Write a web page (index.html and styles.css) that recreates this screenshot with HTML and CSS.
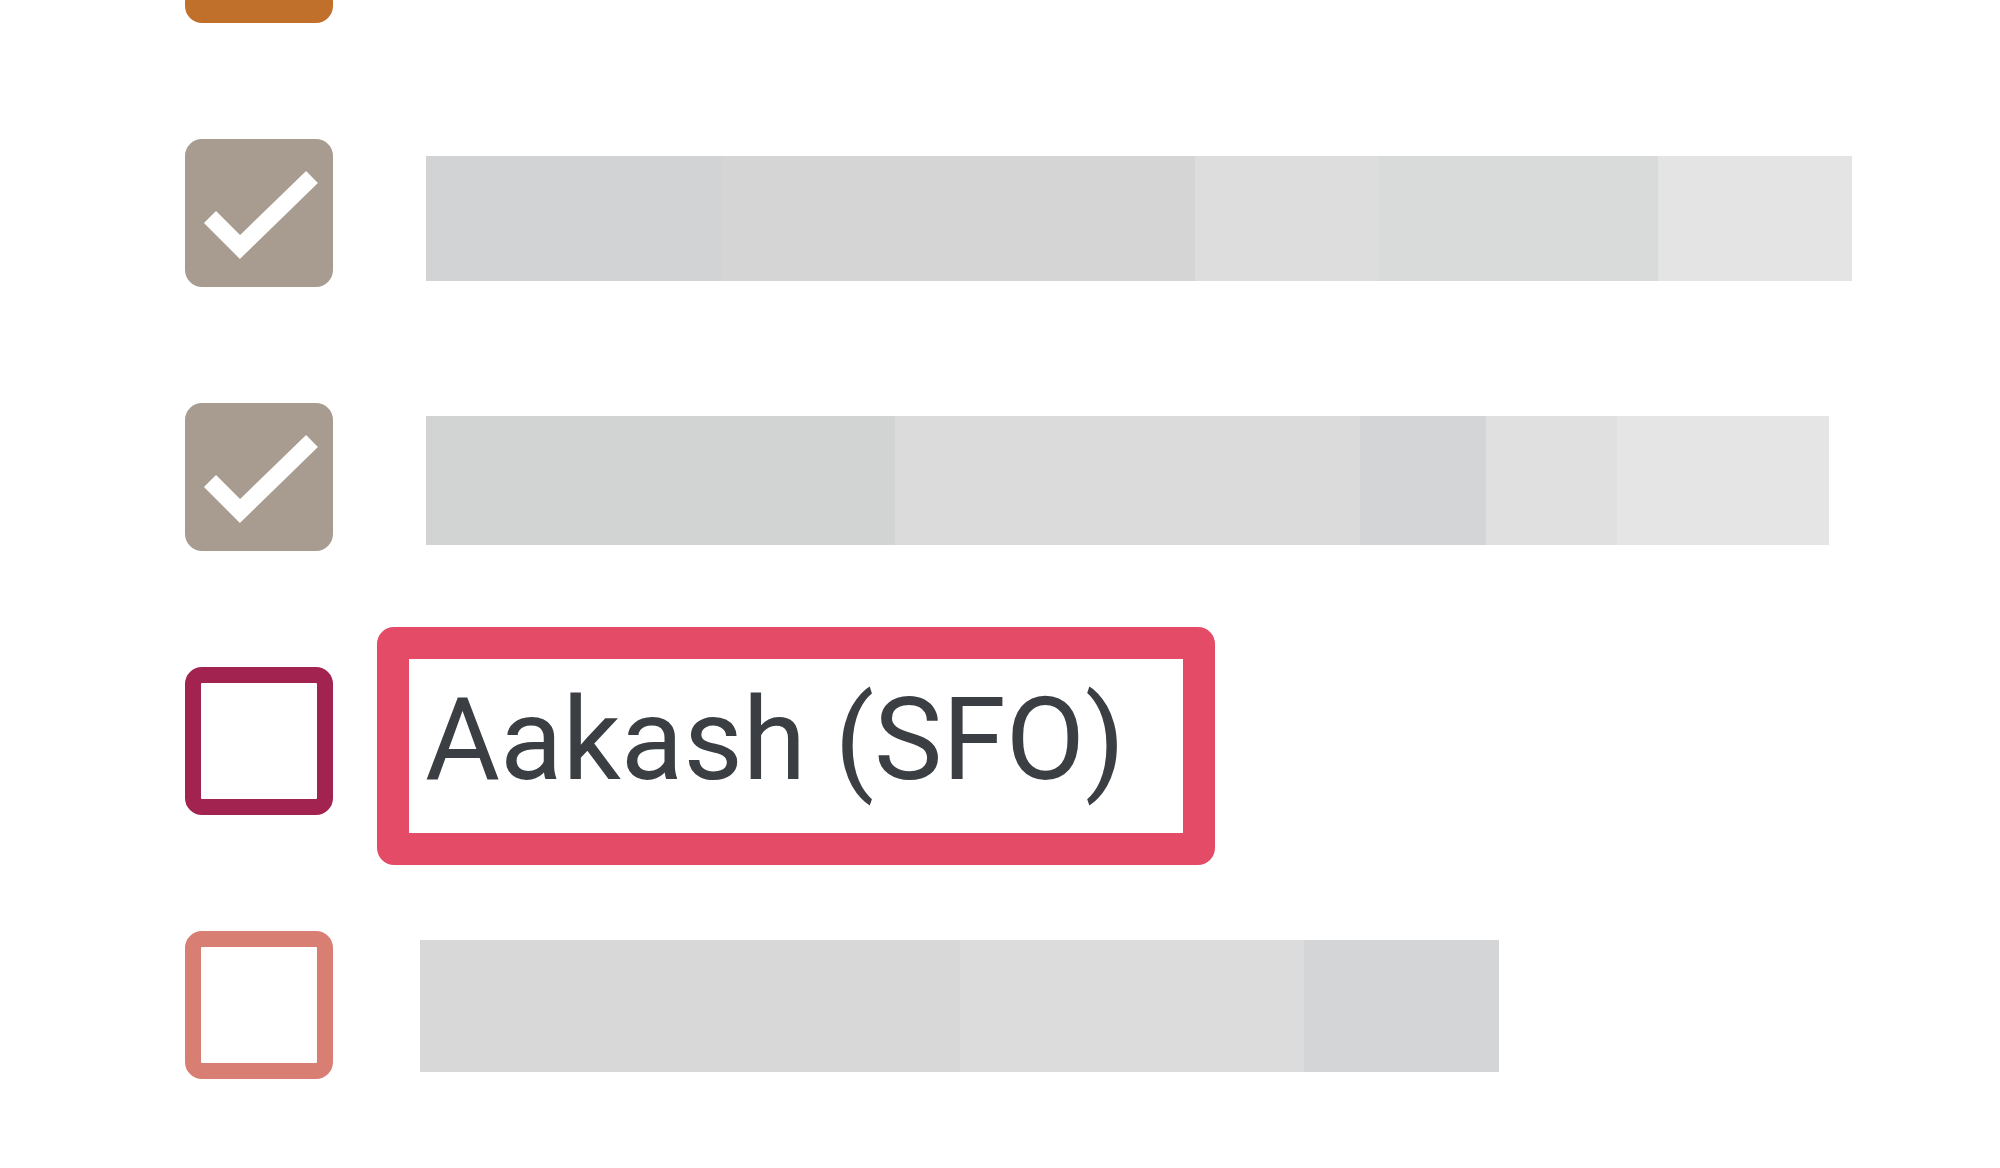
FILE: index.html
```html
<!DOCTYPE html>
<html lang="en">
<head>
<meta charset="utf-8">
<title>Checklist</title>
<link rel="stylesheet" href="styles.css">
</head>
<body>
<ul class="list">
  <li class="row">
    <span class="box box-orange"></span>
  </li>
  <li class="row">
    <span class="box box-checked">
      <svg class="check" viewBox="0 0 148 148"><polyline points="25,78 55,108 127,38"/></svg>
    </span>
    <div class="bar bar-1">
      <span class="seg" style="width:296px;background:#d2d3d5"></span>
      <span class="seg" style="width:473px;background:#d5d5d5"></span>
      <span class="seg" style="width:183px;background:#dddddd"></span>
      <span class="seg" style="width:280px;background:#d9dbda"></span>
      <span class="seg" style="width:194px;background:#e3e4e3"></span>
    </div>
  </li>
  <li class="row">
    <span class="box box-checked">
      <svg class="check" viewBox="0 0 148 148"><polyline points="25,78 55,108 127,38"/></svg>
    </span>
    <div class="bar bar-2">
      <span class="seg" style="width:469px;background:#d2d4d3"></span>
      <span class="seg" style="width:465px;background:#dbdbdb"></span>
      <span class="seg" style="width:126px;background:#d4d5d7"></span>
      <span class="seg" style="width:131px;background:#e0e0e0"></span>
      <span class="seg" style="width:212px;background:#e5e5e5"></span>
    </div>
  </li>
  <li class="row">
    <span class="box box-maroon"></span>
    <span class="label">Aakash (SFO)</span>
  </li>
  <li class="row">
    <span class="box box-salmon"></span>
    <div class="bar bar-4">
      <span class="seg" style="width:540px;background:#d8d8d8"></span>
      <span class="seg" style="width:344px;background:#dbdcdb"></span>
      <span class="seg" style="width:195px;background:#d4d5d7"></span>
    </div>
  </li>
</ul>
</body>
</html>
```

FILE: styles.css
```css
html, body {
  margin: 0;
  padding: 0;
  background: #ffffff;
  font-family: Roboto, "Liberation Sans", sans-serif;
  overflow: hidden;
}

.list {
  list-style: none;
  margin: -125px 0 0 0;
  padding: 0 0 0 185px;
  display: flex;
  flex-direction: column;
}

.row {
  display: flex;
  align-items: flex-start;
  height: 264px;
  flex: none;
}

.box {
  flex: none;
  width: 148px;
  height: 148px;
  border-radius: 17px;
  box-sizing: border-box;
  display: flex;
  align-items: center;
  justify-content: center;
}

.box-orange {
  background: #c0702a;
}

.box-checked {
  background: #a89b8f;
}

.box-maroon {
  border: 16px solid #a22350;
  background: #ffffff;
}

.box-salmon {
  border: 16px solid #d97e73;
  background: #ffffff;
}

.check {
  flex: none;
  width: 148px;
  height: 148px;
  display: block;
}

.check polyline {
  fill: none;
  stroke: #ffffff;
  stroke-width: 17;
  stroke-linecap: butt;
  stroke-linejoin: miter;
}

.bar {
  display: flex;
  flex: none;
}

.seg {
  display: block;
  height: 100%;
  flex: none;
}

.bar-1 {
  margin: 17px 0 0 93px;
  height: 125px;
}

.bar-2 {
  margin: 13px 0 0 93px;
  height: 129px;
}

.bar-4 {
  margin: 9px 0 0 87px;
  height: 132px;
}

.label {
  flex: none;
  margin: -40px 0 0 44px;
  width: 838px;
  height: 238px;
  box-sizing: border-box;
  border: 32px solid #e44b66;
  border-radius: 17px;
  padding: 13px 0 0 16px;
  font-size: 115px;
  line-height: 135px;
  color: #3b3f43;
  white-space: nowrap;
}
```
